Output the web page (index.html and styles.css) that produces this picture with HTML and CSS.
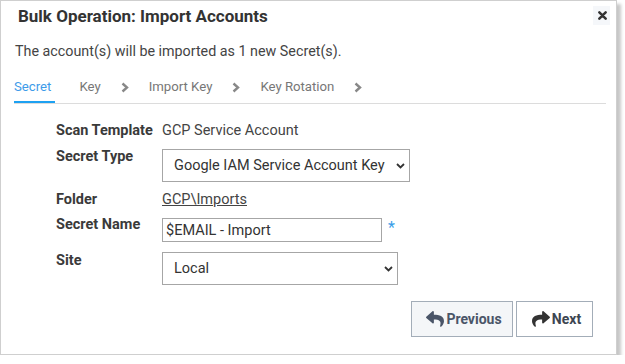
FILE: index.html
```html
<!DOCTYPE html>
<html lang="en">
<head>
    <meta charset="UTF-8">
    <meta name="viewport" content="width=device-width, initial-scale=1.0">
    <title>Bulk Operation: Import Accounts</title>
    <link rel="stylesheet" href="styles.css">
</head>
<body>
    <div class="dialog">
        <div class="dialog-header">
            <div class="dialog-title">Bulk Operation: Import Accounts</div>
            <button class="close-btn" aria-label="Close">
                <svg width="9" height="9" viewBox="0 0 10 10">
                    <path d="M1.5 1.5L8.5 8.5M8.5 1.5L1.5 8.5" stroke="#333" stroke-width="2.8" stroke-linecap="round"/>
                </svg>
            </button>
        </div>

        <p class="summary">The account(s) will be imported as 1 new Secret(s).</p>

        <div class="tabs">
            <span class="tab active">Secret</span>
            <span class="tab">Key</span>
            <svg class="chevron" width="8" height="11" viewBox="0 0 8 11"><path d="M1.5 1.5L6 5.5L1.5 9.5" fill="none" stroke="#888" stroke-width="2.4"/></svg>
            <span class="tab">Import Key</span>
            <svg class="chevron" width="8" height="11" viewBox="0 0 8 11"><path d="M1.5 1.5L6 5.5L1.5 9.5" fill="none" stroke="#888" stroke-width="2.4"/></svg>
            <span class="tab">Key Rotation</span>
            <svg class="chevron" width="8" height="11" viewBox="0 0 8 11"><path d="M1.5 1.5L6 5.5L1.5 9.5" fill="none" stroke="#888" stroke-width="2.4"/></svg>
        </div>

        <div class="form">
            <div class="form-row">
                <label class="form-label">Scan Template</label>
                <span class="form-value">GCP Service Account</span>
            </div>
            <div class="form-row row-type">
                <label class="form-label">Secret Type</label>
                <div class="select-wrap select-type">
                    <select class="select">
                        <option>Google IAM Service Account Key</option>
                    </select>
                    <svg class="select-arrow" width="9" height="6" viewBox="0 0 9 6"><path d="M1 1L4.5 4.5L8 1" fill="none" stroke="#333" stroke-width="1.8"/></svg>
                </div>
            </div>
            <div class="form-row row-folder">
                <label class="form-label">Folder</label>
                <a class="form-link" href="#">GCP\Imports</a>
            </div>
            <div class="form-row row-name">
                <label class="form-label">Secret Name</label>
                <input class="text-input" type="text" value="$EMAIL - Import">
                <span class="required">*</span>
            </div>
            <div class="form-row row-site">
                <label class="form-label">Site</label>
                <div class="select-wrap select-site">
                    <select class="select">
                        <option>Local</option>
                    </select>
                    <svg class="select-arrow" width="9" height="6" viewBox="0 0 9 6"><path d="M1 1L4.5 4.5L8 1" fill="none" stroke="#333" stroke-width="1.8"/></svg>
                </div>
            </div>
        </div>

        <div class="actions">
            <button class="btn btn-prev">
                <svg class="btn-icon" width="20" height="18" viewBox="0 0 512 512"><path d="M8.3 189.8L184.3 37.9C199.7 24.5 224 35.3 224 56v80.1c160.6 1.8 288 34 288 186.2 0 61.4-39.6 122.3-83.3 154.1-13.7 9.9-33.1-2.5-28.1-18.6 45.3-145-21.5-183.5-176.6-185.7V360c0 20.7-24.3 31.5-39.7 18.2l-176-152c-11.1-9.6-11.1-26.8 0-36.4z" fill="#4a5568"/></svg>
                Previous
            </button>
            <button class="btn btn-next">
                <svg class="btn-icon" width="20" height="18" viewBox="0 0 512 512"><path transform="translate(512 0) scale(-1 1)" d="M8.3 189.8L184.3 37.9C199.7 24.5 224 35.3 224 56v80.1c160.6 1.8 288 34 288 186.2 0 61.4-39.6 122.3-83.3 154.1-13.7 9.9-33.1-2.5-28.1-18.6 45.3-145-21.5-183.5-176.6-185.7V360c0 20.7-24.3 31.5-39.7 18.2l-176-152c-11.1-9.6-11.1-26.8 0-36.4z" fill="#333"/></svg>
                Next
            </button>
        </div>
    </div>
</body>
</html>
```

FILE: styles.css
```css
body {
    margin: 0;
    background-color: #fff;
    font-family: Roboto, "Liberation Sans", Arial, sans-serif;
    font-size: 14px;
    color: #444;
}

.dialog {
    box-sizing: border-box;
    width: 617px;
    height: 355px;
    border: 1px solid #cfcfcf;
    box-shadow: 4px 4px 3px rgba(0, 0, 0, 0.22);
    background-color: #fff;
}

.dialog-header {
    display: flex;
    justify-content: space-between;
    align-items: flex-start;
    padding: 5px 6px 0 17px;
}

.dialog-title {
    font-size: 17px;
    font-weight: bold;
    line-height: 20px;
    color: #333;
}

.close-btn {
    display: flex;
    align-items: center;
    justify-content: center;
    width: 17px;
    height: 19px;
    padding: 0 0 0 2px;
    border: none;
    background-color: #f5f7fa;
}

.summary {
    margin: 15px 0 0 14px;
    font-size: 14.3px;
    line-height: 20px;
    color: #444;
}

.tabs {
    display: flex;
    align-items: flex-start;
    gap: 20px;
    margin: 16px 10px 0 13px;
    border-bottom: 1px solid #dcdcdc;
}

.tab {
    font-size: 13.2px;
    line-height: 20px;
    padding-bottom: 6px;
    color: #777;
}

.tab.active {
    color: #3d9be9;
    padding-right: 4px;
    margin-right: 4px;
    padding-bottom: 4px;
    border-bottom: 2px solid #1da1f2;
}

.chevron {
    margin-top: 5px;
}

.form {
    margin-top: 17px;
    padding-left: 55px;
    font-size: 14.5px;
}

.form-row {
    display: flex;
    align-items: flex-start;
}

.form-label {
    width: 106px;
    flex-shrink: 0;
    line-height: 20px;
    font-weight: bold;
    color: #3a3a3a;
}

.form-value {
    line-height: 20px;
    color: #444;
}

.row-type {
    margin-top: 6px;
}

.row-folder {
    margin-top: 8px;
}

.row-name {
    margin-top: 5px;
}

.row-site {
    margin-top: 9px;
}

.form-link {
    line-height: 20px;
    color: #444;
    text-decoration: underline;
}

.select-wrap {
    position: relative;
}

.select-type {
    margin-top: 2px;
    width: 248px;
}

.select-site {
    margin-top: 1px;
    width: 236px;
}

.select {
    box-sizing: border-box;
    width: 100%;
    height: 33px;
    padding: 0 20px 0 11px;
    border: 1px solid #a6a6a6;
    border-radius: 0;
    background-color: #fff;
    font-family: inherit;
    font-size: 14.5px;
    color: #333;
    appearance: none;
    -webkit-appearance: none;
}

.select-arrow {
    position: absolute;
    right: 5px;
    top: 14px;
}

.text-input {
    box-sizing: border-box;
    width: 220px;
    height: 24px;
    margin-top: 3px;
    padding: 0 3px;
    border: 1px solid #a6a6a6;
    font-family: inherit;
    font-size: 14.5px;
    color: #333;
}

.required {
    margin: 3px 0 0 6px;
    font-size: 16px;
    line-height: 20px;
    color: #3a9ee8;
}

.actions {
    display: flex;
    justify-content: flex-end;
    gap: 3px;
    margin-top: 16px;
    padding-right: 23px;
}

.btn {
    display: flex;
    align-items: center;
    justify-content: center;
    gap: 1px;
    box-sizing: border-box;
    height: 36px;
    padding: 0 0 0 3px;
    border: 1px solid #a3adb8;
    font-family: inherit;
    font-size: 14px;
    font-weight: bold;
    color: #4a5568;
    cursor: pointer;
}

.btn-prev {
    width: 102px;
    background-color: #f4f6f8;
}

.btn-next {
    width: 77px;
    background-color: #fff;
    color: #3d4652;
}
```
